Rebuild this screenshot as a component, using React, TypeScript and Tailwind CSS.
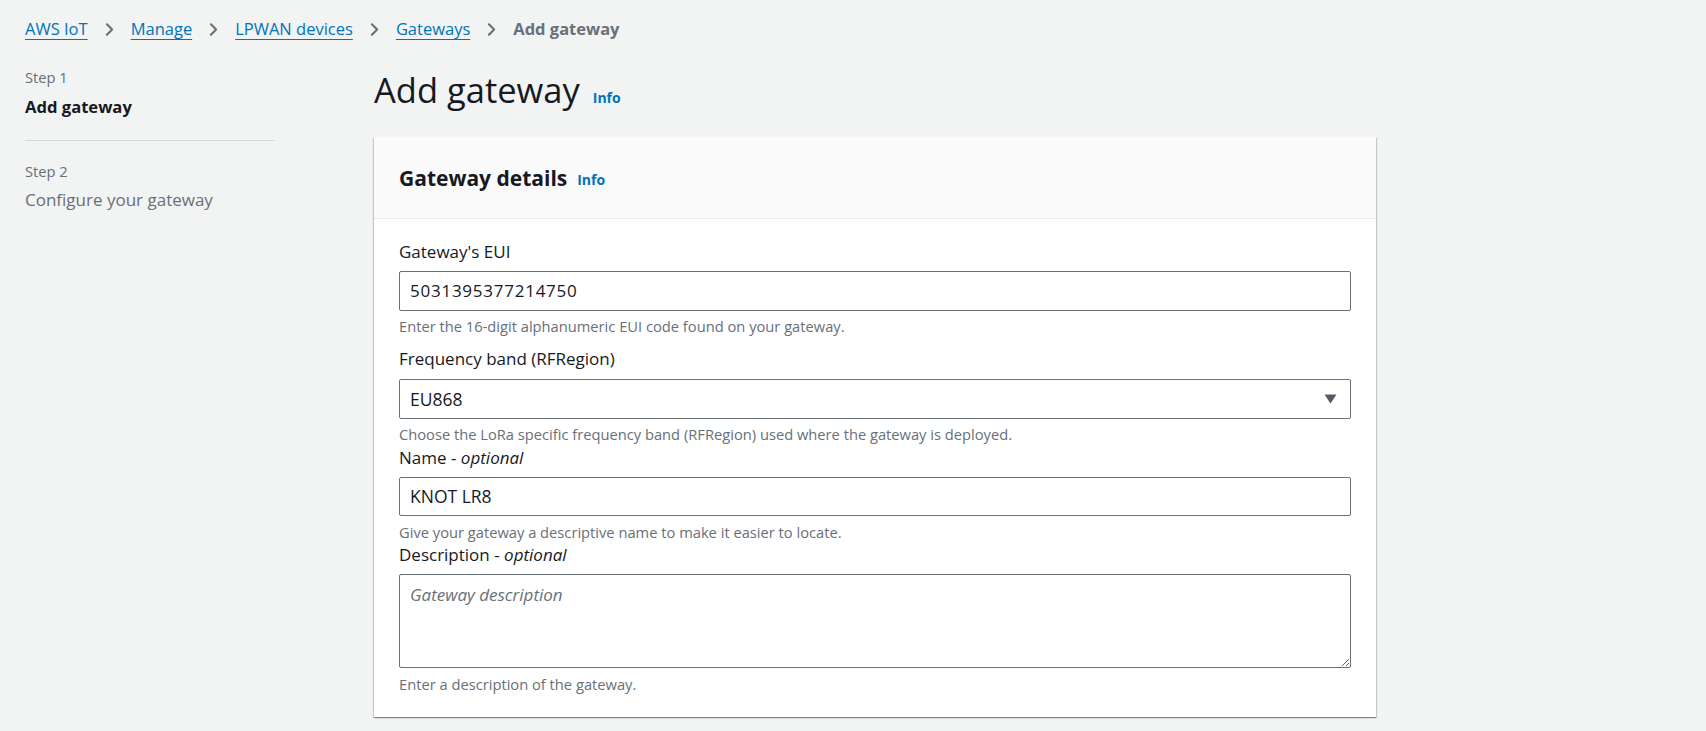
import { ChevronRight } from "lucide-react";

const crumbs = ["AWS IoT", "Manage", "LPWAN devices", "Gateways"];

const Info = ({ className = "" }: { className?: string }) => (
  <span className={"font-bold text-[#0073bb] text-[14px] leading-none " + className}>Info</span>
);

export default function App() {
  return (
    <div className="min-h-screen bg-[#f2f3f3] text-[#16191f] font-['Open_Sans',sans-serif] px-[25px] pt-[18px]">
      {/* breadcrumbs */}
      <nav className="flex items-center h-[22px] text-[16.5px]">
        {crumbs.map((c) => (
          <div key={c} className="flex items-center">
            <span className="text-[#0073bb] underline underline-offset-[4px] decoration-1">{c}</span>
            <ChevronRight className="mx-[11px] h-[21px] w-[21px] text-[#687078]" strokeWidth={2.4} />
          </div>
        ))}
        <span className="font-bold text-[#687078]">Add gateway</span>
      </nav>

      <div className="flex mt-[28px]">
        {/* wizard steps */}
        <aside className="w-[250px] shrink-0">
          <div className="text-[14.7px] leading-[18px] text-[#687078]">Step 1</div>
          <div className="mt-[10px] text-[16.6px] leading-[22px] font-bold">Add gateway</div>
          <div className="mt-[22px] h-px bg-[#d5dbdb]" />
          <div className="mt-[21px] text-[14.7px] leading-[18px] text-[#687078]">Step 2</div>
          <div className="mt-[9px] text-[17px] leading-[22px] text-[#687078]">Configure your gateway</div>
        </aside>

        <main className="ml-[99px] w-[1002px]">
          <div className="flex items-baseline gap-[13px] pt-[2px] h-[40px]">
            <h1 className="text-[34.5px] leading-[40px] font-normal">Add gateway</h1>
            <Info />
          </div>

          <section className="mt-[29px] bg-white shadow-[0_1px_1px_0_rgba(0,28,36,0.3),1px_1px_1px_0_rgba(0,28,36,0.15),-1px_1px_1px_0_rgba(0,28,36,0.15)]">
            <header className="h-[82px] flex items-center gap-[10px] px-[25px] bg-[#fafafa] border-b border-[#eaeded]">
              <h2 className="text-[21px] font-bold leading-[28px]">Gateway details</h2>
              <Info className="mt-[5px]" />
            </header>

            <div className="px-[25px] pt-[22px] pb-[24px]">
              <label className="block text-[17px] leading-[22px]">Gateway's EUI</label>
              <div className="mt-[8px] h-[40px] border border-[#687078] rounded-[2px] px-[10px] flex items-center text-[17px] tracking-[0.75px]">
                5031395377214750
              </div>
              <p className="mt-[6px] text-[14.7px] leading-[18px] text-[#687078]">
                Enter the 16-digit alphanumeric EUI code found on your gateway.
              </p>

              <label className="mt-[13px] block text-[17px] leading-[22px]">Frequency band (RFRegion)</label>
              <div className="mt-[9px] h-[40px] border border-[#687078] rounded-[2px] pl-[10px] pr-[13px] flex items-center justify-between text-[17.5px]">
                <span>EU868</span>
                <svg width="13" height="10" viewBox="0 0 13 10">
                  <path d="M0.5 0.5h12L6.5 9.5z" fill="#545b64" />
                </svg>
              </div>
              <p className="mt-[6px] text-[14.7px] leading-[18px] text-[#687078]">
                Choose the LoRa specific frequency band (RFRegion) used where the gateway is deployed.
              </p>

              <label className="mt-[4px] block text-[17px] leading-[22px]">
                Name - <i>optional</i>
              </label>
              <div className="mt-[8px] h-[39px] border border-[#687078] rounded-[2px] px-[10px] flex items-center text-[17.5px]">
                KNOT LR8
              </div>
              <p className="mt-[7px] text-[14.7px] leading-[18px] text-[#687078]">
                Give your gateway a descriptive name to make it easier to locate.
              </p>

              <label className="mt-[3px] block text-[17px] leading-[22px]">
                Description - <i>optional</i>
              </label>
              <textarea
                className="mt-[8px] block w-full h-[94px] border border-[#687078] rounded-[2px] px-[10px] py-[7px] text-[17px] resize-y outline-none placeholder:italic placeholder:text-[#687078]"
                placeholder="Gateway description"
              />
              <p className="mt-[7px] text-[14.7px] leading-[18px] text-[#687078]">Enter a description of the gateway.</p>
            </div>
          </section>
        </main>
      </div>
    </div>
  );
}
